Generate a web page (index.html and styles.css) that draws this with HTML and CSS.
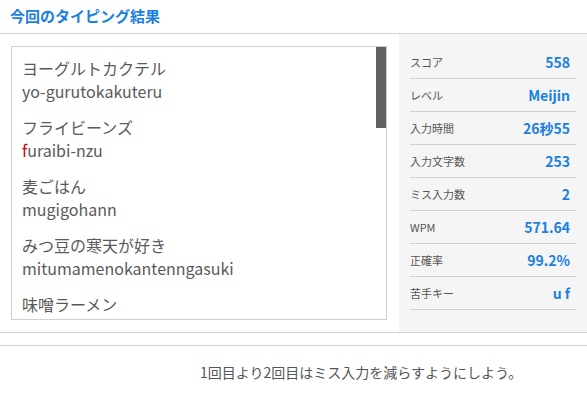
FILE: index.html
```html
<!DOCTYPE html>
<html lang="ja">
<head>
<meta charset="utf-8">
<link rel="stylesheet" href="styles.css">
</head>
<body>
<header class="head"><h1 class="title">今回のタイピング結果</h1></header>
<main class="main">
  <section class="left">
    <div class="list-box">
      <ul class="list">
        <li class="item"><div class="jp">ヨーグルトカクテル</div><div class="ro">yo-gurutokakuteru</div></li>
        <li class="item"><div class="jp">フライビーンズ</div><div class="ro"><span class="miss">f</span>uraibi-nzu</div></li>
        <li class="item"><div class="jp">麦ごはん</div><div class="ro">mugigohann</div></li>
        <li class="item"><div class="jp">みつ豆の寒天が好き</div><div class="ro">mitumamenokantenngasuki</div></li>
        <li class="item"><div class="jp">味噌ラーメン</div></li>
      </ul>
      <div class="thumb"></div>
    </div>
  </section>
  <aside class="stats">
    <div class="row"><span class="label">スコア</span><span class="value">558</span></div>
    <div class="row"><span class="label">レベル</span><span class="value">Meijin</span></div>
    <div class="row"><span class="label">入力時間</span><span class="value">26秒55</span></div>
    <div class="row"><span class="label">入力文字数</span><span class="value">253</span></div>
    <div class="row"><span class="label">ミス入力数</span><span class="value">2</span></div>
    <div class="row"><span class="label">WPM</span><span class="value">571.64</span></div>
    <div class="row"><span class="label">正確率</span><span class="value">99.2%</span></div>
    <div class="row"><span class="label">苦手キー</span><span class="value">u f</span></div>
  </aside>
</main>
<div class="spacer"></div>
<footer class="foot"><p class="advice">1回目より2回目はミス入力を減らすようにしよう。</p></footer>
</body>
</html>
```

FILE: styles.css
```css
* { box-sizing: border-box; }
html, body { margin: 0; padding: 0; background: #fff; }
body {
  font-family: "Noto Sans CJK JP", "Noto Sans", sans-serif;
  color: #555;
  width: 587px;
  height: 396px;
  overflow: hidden;
}
.head {
  height: 34px;
  border-bottom: 1px solid #d2d2d2;
  padding-left: 10px;
  display: flex;
  align-items: center;
}
.title {
  margin: 0;
  font-size: 15px;
  font-weight: 700;
  color: #1a80e0;
  line-height: 20px;
  margin-top: -1px;
}
.main {
  display: flex;
  height: 299px;
  border-bottom: 1px solid #d2d2d2;
}
.left {
  width: 399px;
  padding: 12px 12px 0 11px;
}
.list-box {
  position: relative;
  width: 376px;
  height: 274px;
  border: 1px solid #cfcfcf;
  overflow: hidden;
}
.list {
  list-style: none;
  margin: 0;
  padding: 10px 10px 0 10px;
}
.item { margin-bottom: 13px; }
.jp, .ro {
  font-size: 16px;
  line-height: 23px;
  color: #5a5a5a;
}
.miss { color: #d40000; }
.thumb {
  position: absolute;
  right: 0;
  top: 0;
  width: 10px;
  height: 81px;
  background: #5f6161;
}
.stats {
  width: 188px;
  background: #f5f5f5;
  padding: 12px 11px 0 11px;
}
.row {
  height: 33px;
  border-bottom: 1px solid #d0d0d0;
  display: flex;
  justify-content: space-between;
  align-items: center;
  padding-right: 6px;
}
.label {
  font-size: 11px;
  color: #555;
}
.value {
  font-size: 14px;
  font-weight: 700;
  color: #1a80e0;
}
.spacer {
  height: 13px;
  border-bottom: 1px solid #d2d2d2;
}
.foot {
  padding: 16px 0 0 200px;
}
.advice {
  margin: 0;
  font-size: 14px;
  line-height: 20px;
  color: #555;
}
```
